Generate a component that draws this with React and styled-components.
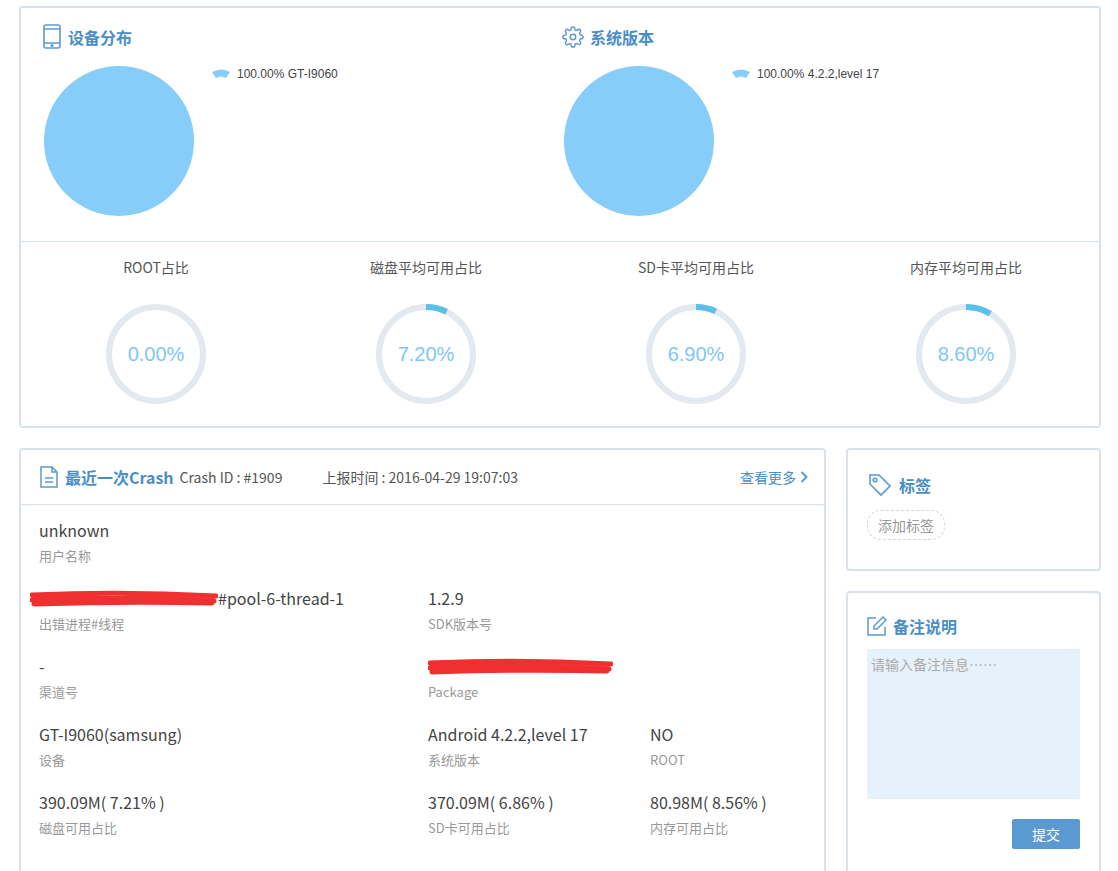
import React from "react";
import styled, { createGlobalStyle } from "styled-components";

const G = createGlobalStyle`
  body { margin: 0; background: #fff; font-family: "Microsoft YaHei", "Noto Sans CJK SC", "Liberation Sans", sans-serif; color: #555; }
`;
const Page = styled.div`padding: 6px 17px 0 19px; display: flex; flex-direction: column; gap: 20px;`;
const Card = styled.div`border: 2px solid #d8e2ea; border-radius: 4px; background: #fff; box-sizing: border-box;`;
const ChartsRow = styled.div`display: grid; grid-template-columns: 520px 1fr; height: 233px; border-bottom: 1px solid #d8e2ea;`;
const ChartCol = styled.div`padding: 14px 0 0 21px;`;
const Title = styled.div`display: flex; align-items: center; gap: 6px; color: #4a8ec6; font-size: 16px; font-weight: bold; height: 30px;`;
const ChartBody = styled.div`display: flex; margin-top: 14px;`;
const Pie = styled.div`width: 150px; height: 150px; border-radius: 50%; background: #87cdf9; margin-left: 2px;`;
const Legend = styled.div`display: flex; align-items: center; gap: 6px; font-size: 12px; color: #444; margin: 0 0 0 17px; height: 16px; font-family: "Liberation Sans", sans-serif;`;
const Gauges = styled.div`display: grid; grid-template-columns: repeat(4, 270px); height: 184px;`;
const Gauge = styled.div`display: flex; flex-direction: column; align-items: center; padding-top: 15px;`;
const GLabel = styled.div`font-size: 14px; color: #555; height: 20px;`;
const GWrap = styled.div`position: relative; width: 100px; height: 100px; margin-top: 27px;`;
const GVal = styled.div`position: absolute; inset: 0; display: flex; align-items: center; justify-content: center; color: #7fc6f5; font-size: 20px; font-family: "Liberation Sans", sans-serif;`;
const Bottom = styled.div`display: flex; gap: 20px; align-items: flex-start;`;
const CrashCard = styled(Card)`width: 807px; height: 440px;`;
const CrashHead = styled.div`height: 54px; border-bottom: 1px solid #d8e2ea; display: flex; align-items: center; padding: 0 16px 0 18px; gap: 6px;`;
const Meta = styled.span`font-size: 14px; color: #555; margin-left: ${p => p.ml || 0}px;`;
const More = styled.span`margin-left: auto; color: #4a8ec6; font-size: 14px; display: flex; align-items: center; gap: 4px;`;
const Grid = styled.div`display: grid; grid-template-columns: 389px 222px 1fr; padding: 14px 0 0 18px; row-gap: 20px;`;
const Cell = styled.div`grid-column: ${p => p.span || "auto"}; height: 48px; display: flex; flex-direction: column; gap: 5px;`;
const Val = styled.div`font-size: 16px; color: #444; height: 22px; display: flex; align-items: center; white-space: nowrap;`;
const Lbl = styled.div`font-size: 13px; color: #999;`;
const Side = styled.div`flex: 1; display: flex; flex-direction: column; gap: 20px;`;
const TagCard = styled(Card)`height: 123px; padding: 20px 19px;`;
const Pill = styled.div`display: inline-block; margin-top: 10px; border: 1px dashed #c9dcd5; border-radius: 14px; padding: 4px 10px; font-size: 14px; color: #999;`;
const NoteCard = styled(Card)`height: 300px; padding: 18px 19px;`;
const Area = styled.div`margin-top: 8px; height: 150px; background: #e6f2fb; color: #aaa; font-size: 14px; padding: 5px 4px; box-sizing: border-box;`;
const Btn = styled.div`margin: 20px 0 0 auto; width: 68px; height: 30px; background: #5b9ad0; color: #fff; font-size: 14px; display: flex; align-items: center; justify-content: center; border-radius: 2px;`;

const Ring = ({ p }) => {
  const r = 47, c = 2 * Math.PI * r;
  return (
    <svg width="100" height="100" viewBox="0 0 100 100">
      <circle cx="50" cy="50" r={r} fill="none" stroke="#e3e9ef" strokeWidth="6" />
      <circle cx="50" cy="50" r={r} fill="none" stroke="#5bc0e8" strokeWidth="6"
        strokeDasharray={`${c * p / 100} ${c}`} transform="rotate(-90 50 50)" />
    </svg>
  );
};
const Swatch = () => (
  <svg width="20" height="10" viewBox="0 0 20 10"><path d="M1 3 Q10 -2 19 3 L15 9 Q10 6 5 9 Z" fill="#87cdf9" /></svg>
);
const Scribble = ({ w }) => (
  <svg width={w} height="22" viewBox={`0 0 ${w} 22`}>
    <path d={`M2 8 Q${w/2} 4 ${w-2} 9 M2 13 Q${w/2} 9 ${w-4} 14 M4 17 Q${w/2} 14 ${w-6} 16`} stroke="#f03030" strokeWidth="5" fill="none" strokeLinecap="round" />
  </svg>
);
const S = "#5b9ad0";
export default function App() {
  const gauges = [["ROOT占比", 0], ["磁盘平均可用占比", 7.2], ["SD卡平均可用占比", 6.9], ["内存平均可用占比", 8.6]];
  return (
    <Page>
      <G />
      <Card>
        <ChartsRow>
          <ChartCol>
            <Title>
              <svg width="20" height="26" viewBox="0 0 20 26" fill="none" stroke={S} strokeWidth="1.6"><rect x="2" y="1" width="16" height="23" rx="2"/><path d="M2 19h16M2 5h16"/><circle cx="10" cy="21.5" r="0.8" fill={S}/></svg>
              设备分布
            </Title>
            <ChartBody><Pie /><Legend><Swatch />100.00% GT-I9060</Legend></ChartBody>
          </ChartCol>
          <ChartCol>
            <Title>
              <svg width="22" height="22" viewBox="0 0 24 24" fill="none" stroke={S} strokeWidth="1.6"><circle cx="12" cy="12" r="3"/><path d="M19.4 15a1.65 1.65 0 0 0 .33 1.82l.06.06a2 2 0 1 1-2.83 2.83l-.06-.06a1.65 1.65 0 0 0-1.82-.33 1.65 1.65 0 0 0-1 1.51V21a2 2 0 1 1-4 0v-.09A1.65 1.65 0 0 0 9 19.4a1.65 1.65 0 0 0-1.82.33l-.06.06a2 2 0 1 1-2.83-2.83l.06-.06A1.65 1.65 0 0 0 4.68 15a1.65 1.65 0 0 0-1.51-1H3a2 2 0 1 1 0-4h.09A1.65 1.65 0 0 0 4.6 9a1.65 1.65 0 0 0-.33-1.82l-.06-.06a2 2 0 1 1 2.83-2.83l.06.06A1.65 1.65 0 0 0 9 4.68a1.65 1.65 0 0 0 1-1.51V3a2 2 0 1 1 4 0v.09a1.65 1.65 0 0 0 1 1.51 1.65 1.65 0 0 0 1.82-.33l.06-.06a2 2 0 1 1 2.83 2.83l-.06.06A1.65 1.65 0 0 0 19.4 9a1.65 1.65 0 0 0 1.51 1H21a2 2 0 1 1 0 4h-.09a1.65 1.65 0 0 0-1.51 1z"/></svg>
              系统版本
            </Title>
            <ChartBody><Pie /><Legend><Swatch />100.00% 4.2.2,level 17</Legend></ChartBody>
          </ChartCol>
        </ChartsRow>
        <Gauges>
          {gauges.map(([l, p]) => (
            <Gauge key={l}><GLabel>{l}</GLabel><GWrap><Ring p={p} /><GVal>{p.toFixed(2)}%</GVal></GWrap></Gauge>
          ))}
        </Gauges>
      </Card>
      <Bottom>
        <CrashCard>
          <CrashHead>
            <svg width="20" height="24" viewBox="0 0 20 24" fill="none" stroke={S} strokeWidth="1.5"><path d="M2 2h11l5 5v15H2z M13 2v5h5 M6 13h8 M6 17h8"/></svg>
            <Title as="span">最近一次Crash</Title>
            <Meta>Crash ID : #1909</Meta>
            <Meta ml={34}>上报时间 : 2016-04-29 19:07:03</Meta>
            <More>查看更多<svg width="8" height="12" viewBox="0 0 8 12"><path d="M1.5 1l5 5-5 5" stroke={S} strokeWidth="2" fill="none"/></svg></More>
          </CrashHead>
          <Grid>
            <Cell span="1 / 4"><Val>unknown</Val><Lbl>用户名称</Lbl></Cell>
            <Cell><Val><span style={{ marginLeft: -9, display: "flex" }}><Scribble w={188} /></span>#pool-6-thread-1</Val><Lbl>出错进程#线程</Lbl></Cell>
            <Cell span="2 / 4"><Val>1.2.9</Val><Lbl>SDK版本号</Lbl></Cell>
            <Cell><Val>-</Val><Lbl>渠道号</Lbl></Cell>
            <Cell span="2 / 4"><Val><Scribble w={185} /></Val><Lbl>Package</Lbl></Cell>
            <Cell><Val>GT-I9060(samsung)</Val><Lbl>设备</Lbl></Cell>
            <Cell><Val>Android 4.2.2,level 17</Val><Lbl>系统版本</Lbl></Cell>
            <Cell><Val>NO</Val><Lbl>ROOT</Lbl></Cell>
            <Cell><Val>390.09M( 7.21% )</Val><Lbl>磁盘可用占比</Lbl></Cell>
            <Cell><Val>370.09M( 6.86% )</Val><Lbl>SD卡可用占比</Lbl></Cell>
            <Cell><Val>80.98M( 8.56% )</Val><Lbl>内存可用占比</Lbl></Cell>
          </Grid>
        </CrashCard>
        <Side>
          <TagCard>
            <Title>
              <svg width="26" height="26" viewBox="0 0 26 26" fill="none" stroke={S} strokeWidth="1.6"><path d="M3 3h9l11 11-9 9L3 12z"/><circle cx="8" cy="8" r="1.8"/></svg>
              标签
            </Title>
            <Pill>添加标签</Pill>
          </TagCard>
          <NoteCard>
            <Title>
              <svg width="20" height="20" viewBox="0 0 20 20" fill="none" stroke={S} strokeWidth="1.5"><path d="M9 2H1v17h17v-8"/><path d="M16 1l3 3-9 9H7v-3z"/></svg>
              备注说明
            </Title>
            <Area>请输入备注信息……</Area>
            <Btn>提交</Btn>
          </NoteCard>
        </Side>
      </Bottom>
    </Page>
  );
}
